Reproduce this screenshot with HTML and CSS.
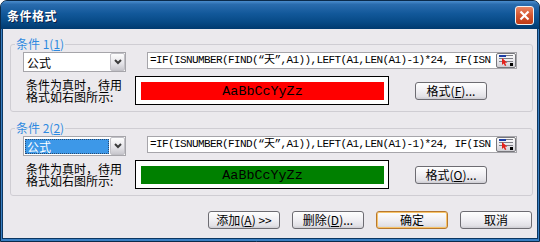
FILE: index.html
```html
<!DOCTYPE html>
<html lang="zh-CN">
<head>
    <meta charset="UTF-8">
    <title>条件格式</title>
    <link rel="stylesheet" href="styles.css">
</head>
<body>
<div class="window">
    <div class="titlebar">
        <span class="title">条件格式</span>
        <span class="close-btn">
            <svg width="11" height="11" viewBox="0 0 11 11"><path d="M1.5 1.5L9.5 9.5M9.5 1.5L1.5 9.5" stroke="#fff" stroke-width="2.2"/></svg>
        </span>
    </div>
    <div class="client">
        <fieldset class="cond">
            <legend>条件 1(<u>1</u>)</legend>
            <div class="cond-body">
                <div class="row">
                    <div class="combo">
                        <span class="combo-value">公式</span>
                        <span class="combo-arrow"><svg width="8" height="6" viewBox="0 0 8 6"><path d="M1 1L4 4L7 1" fill="none" stroke="#3c3c3c" stroke-width="2"/></svg></span>
                    </div>
                    <div class="formula">
                        <span class="formula-text">=IF(ISNUMBER(FIND(“天”,A1)),LEFT(A1,LEN(A1)-1)*24, IF(ISN</span>
                        <span class="ref-btn">
                            <svg width="14" height="11" viewBox="0 0 14 11">
                                <rect x="0" y="0" width="7" height="2" fill="#1c3ea6"/>
                                <rect x="7" y="0" width="7" height="1" fill="#7d7d85"/>
                                <rect x="0" y="3" width="14" height="1" fill="#7d7d85"/>
                                <rect x="0" y="6" width="14" height="1" fill="#7d7d85"/>
                                <path d="M3 3L3 10L4.6 8.4L6 11L7.3 10.4L6 7.8L8.4 7.8Z" fill="#e3211b"/>
                                <rect x="11" y="8" width="3" height="3" fill="#000"/>
                            </svg>
                        </span>
                    </div>
                </div>
                <div class="row second">
                    <div class="hint">条件为真时，待用<br>格式如右图所示:</div>
                    <div class="preview"><div class="swatch red">AaBbCcYyZz</div></div>
                    <button class="btn fmt">格式(<u>F</u>)...</button>
                </div>
            </div>
        </fieldset>

        <fieldset class="cond">
            <legend>条件 2(<u>2</u>)</legend>
            <div class="cond-body">
                <div class="row">
                    <div class="combo">
                        <span class="combo-value selected">公式</span>
                        <span class="combo-arrow"><svg width="8" height="6" viewBox="0 0 8 6"><path d="M1 1L4 4L7 1" fill="none" stroke="#3c3c3c" stroke-width="2"/></svg></span>
                    </div>
                    <div class="formula">
                        <span class="formula-text">=IF(ISNUMBER(FIND(“天”,A1)),LEFT(A1,LEN(A1)-1)*24, IF(ISN</span>
                        <span class="ref-btn">
                            <svg width="14" height="11" viewBox="0 0 14 11">
                                <rect x="0" y="0" width="7" height="2" fill="#1c3ea6"/>
                                <rect x="7" y="0" width="7" height="1" fill="#7d7d85"/>
                                <rect x="0" y="3" width="14" height="1" fill="#7d7d85"/>
                                <rect x="0" y="6" width="14" height="1" fill="#7d7d85"/>
                                <path d="M3 3L3 10L4.6 8.4L6 11L7.3 10.4L6 7.8L8.4 7.8Z" fill="#e3211b"/>
                                <rect x="11" y="8" width="3" height="3" fill="#000"/>
                            </svg>
                        </span>
                    </div>
                </div>
                <div class="row second">
                    <div class="hint">条件为真时，待用<br>格式如右图所示:</div>
                    <div class="preview"><div class="swatch green">AaBbCcYyZz</div></div>
                    <button class="btn fmt">格式(<u>O</u>)...</button>
                </div>
            </div>
        </fieldset>

        <div class="actions">
            <button class="btn">添加(<u>A</u>) &gt;&gt;</button>
            <button class="btn">删除(<u>D</u>)...</button>
            <button class="btn default">确定</button>
            <button class="btn">取消</button>
        </div>
    </div>
</div>
</body>
</html>
```

FILE: styles.css
```css
* {
    box-sizing: border-box;
}
body {
    margin: 0;
    font-family: "Noto Sans CJK SC", "Liberation Sans", sans-serif;
    font-size: 12px;
    color: #000;
}
.window {
    width: 540px;
    height: 242px;
    display: flex;
    flex-direction: column;
    background: #3a7fc2;
    border: 1px solid #0b2a4a;
    border-radius: 7px 7px 0 0;
    padding: 0 1px 2px;
    overflow: hidden;
}
.titlebar {
    height: 28px;
    margin: 0 -1px;
    padding: 0 5px 0 6px;
    display: flex;
    align-items: center;
    justify-content: space-between;
    background: linear-gradient(#4b8dcd 0%, #2a6cae 12%, #12589a 45%, #074a86 75%, #003a6f 100%);
}
.title {
    color: #fff;
    font-weight: bold;
    font-size: 12px;
    letter-spacing: 0.5px;
    text-shadow: 1px 1px 0 #0a1c44;
}
.close-btn {
    width: 19px;
    height: 19px;
    display: flex;
    align-items: center;
    justify-content: center;
    border: 1px solid #f4f4f4;
    border-radius: 3px;
    background: linear-gradient(#ea8562, #d4552f 50%, #bf3b16);
}
.client {
    flex: 1;
    display: flex;
    flex-direction: column;
    background: #ebe9ed;
    border: 1px solid #0b3763;
    border-top: none;
}
.cond {
    margin: 8px 4px 0 7px;
    padding: 0;
    border: 1px solid #cfcdd3;
    border-radius: 3px;
    min-width: 0;
}
.cond + .cond {
    margin-top: 9px;
}
.cond legend {
    margin-left: 4px;
    padding: 0 1px;
    line-height: 14px;
    color: #2f8ae0;
}
.cond legend u {
    text-underline-offset: 1px;
}
.cond-body {
    padding: 1px 15px 6px 12px;
}
.row {
    display: flex;
    align-items: flex-start;
    gap: 21px;
}
.row.second {
    margin-top: 4px;
    align-items: center;
    gap: 0;
}
.combo {
    width: 103px;
    height: 20px;
    display: flex;
    align-items: center;
    background: #fff;
    border: 1px solid #a6a5aa;
}
.combo-value {
    flex: 1;
    margin: 1px;
    padding-left: 2px;
    line-height: 15px;
}
.combo-value.selected {
    background: #3d98e8;
    color: #fff;
    outline: 1px dotted #2a4a70;
    outline-offset: -1px;
}
.combo-arrow {
    width: 15px;
    height: 18px;
    display: flex;
    align-items: center;
    justify-content: center;
    border: 1px solid #c1c0c6;
    border-radius: 2px;
    background: linear-gradient(#fdfdfd, #e4e3e8 60%, #c8c7cd);
}
.formula {
    width: 370px;
    height: 17px;
    display: flex;
    align-items: center;
    background: #fff;
    border: 1px solid #a6a5aa;
}
.formula-text {
    flex: 1;
    overflow: hidden;
    white-space: nowrap;
    padding-left: 2px;
    font-family: "Liberation Mono", "Noto Sans CJK SC", monospace;
    font-size: 11px;
    letter-spacing: -0.6px;
    line-height: 15px;
}
.ref-btn {
    width: 20px;
    height: 15px;
    display: flex;
    align-items: center;
    justify-content: center;
    border: 1px solid #77777c;
    border-radius: 2px;
    background: linear-gradient(#fbfbfb, #e6e5ea 60%, #cfced3);
}
.hint {
    width: 109px;
    margin-left: 3px;
    line-height: 12px;
}
.preview {
    width: 254px;
    height: 29px;
    padding: 5px 4px 4px 5px;
    background: #fff;
    border: 1px solid #000;
}
.swatch {
    height: 100%;
    display: flex;
    align-items: center;
    justify-content: center;
    font-family: "Liberation Mono", monospace;
    font-size: 13.4px;
}
.swatch.red {
    background: #ff0000;
}
.swatch.green {
    background: #008000;
}
.btn {
    width: 72px;
    height: 18px;
    padding: 0;
    font-family: "Noto Sans CJK SC", "Liberation Sans", sans-serif;
    font-size: 12px;
    line-height: 16px;
    color: #000;
    border: 1px solid #6d6c72;
    border-radius: 3px;
    background: linear-gradient(#fefefe, #f0eff3 50%, #e2e1e6 85%, #cdccd2);
}
.btn.fmt {
    margin-left: 26px;
}
.btn.default {
    border-color: #b8782e;
    box-shadow: inset 0 0 0 1px #f7c46a;
}
.actions {
    margin-top: 15px;
    padding-right: 5px;
    display: flex;
    justify-content: flex-end;
    gap: 12px;
}
```
